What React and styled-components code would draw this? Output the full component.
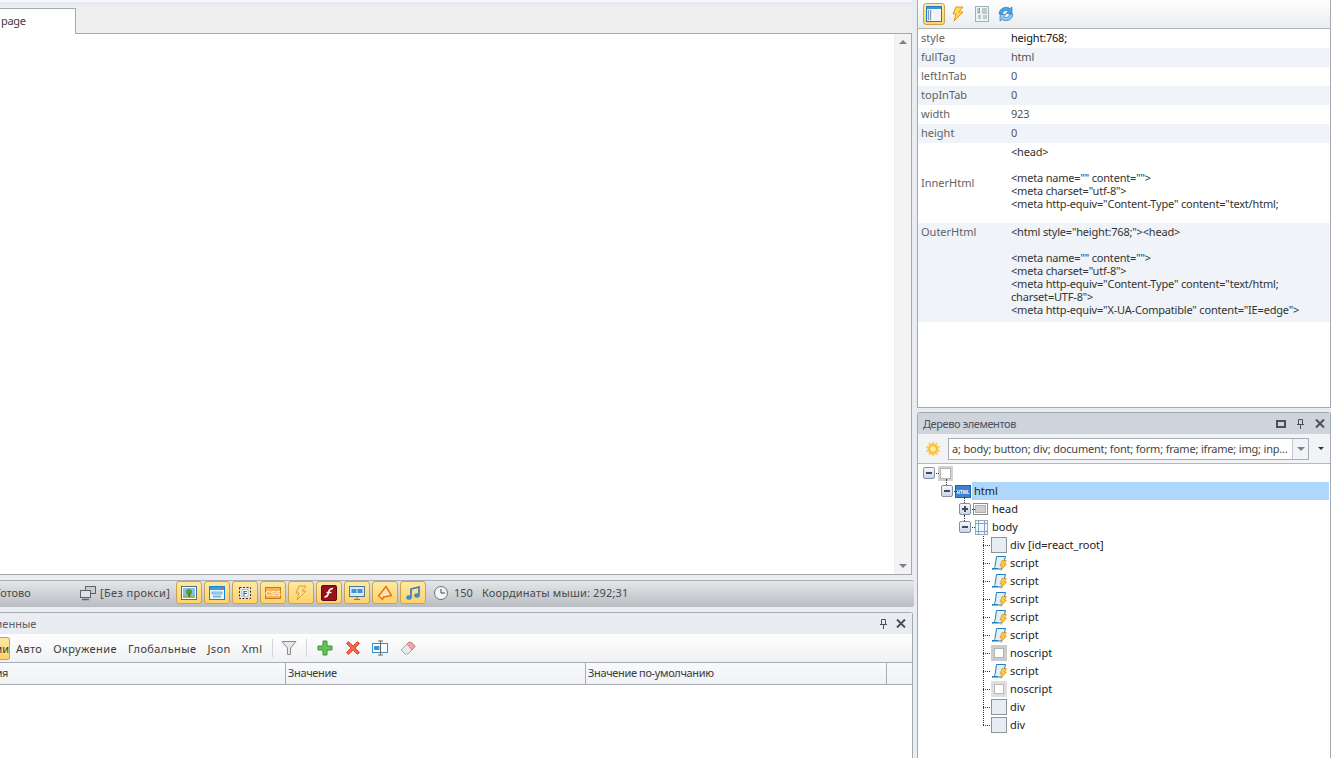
import React from 'react'
import styled, { createGlobalStyle } from 'styled-components'

const GlobalStyle = createGlobalStyle`
  html, body {
    margin: 0;
    padding: 0;
    height: 100%;
    overflow: hidden;
    background: #e9edf2;
  }
  body {
    font-family: "Noto Sans", "Liberation Sans", sans-serif;
    font-size: 11px;
    color: #3c3c3c;
  }
`

const Page = styled.div`
  display: grid;
  grid-template-columns: 917px 414px;
  width: 1331px;
  height: 758px;
  overflow: hidden;
`

const LeftColumn = styled.div`
  display: flex;
  flex-direction: column;
  min-width: 0;
`

const TopStrip = styled.div`
  height: 8px;
  width: 912px;
  background: linear-gradient(#f7f8fb 0, #f7f8fb 2px, #e4e7f0 2px, #e8ebf1 5px, #efefef 8px);
`

const TabStrip = styled.div`
  display: flex;
  height: 25px;
  width: 912px;
  background: #efefef;
  border-bottom: 1px solid #a4a8b0;
`

const Tab = styled.div`
  width: 74px;
  height: 26px;
  padding-left: 1px;
  line-height: 23px;
  letter-spacing: -0.3px;
  background: #fff;
  border-top: 1px solid #a4a8b0;
  border-right: 1px solid #a4a8b0;
`

const Document = styled.div`
  display: flex;
  justify-content: flex-end;
  width: 911px;
  height: 540px;
  background: #fff;
  border-right: 1px solid #a4a8b0;
  border-bottom: 1px solid #a4a8b0;
`

const Scrollbar = styled.div`
  display: flex;
  flex-direction: column;
  justify-content: space-between;
  align-items: center;
  width: 17px;
  padding: 6px 0;
  box-sizing: border-box;
  background: #f3f3f3;
  border-left: 1px solid #ececec;
`

const Arrow = styled.div`
  width: 0;
  height: 0;
  border-left: 4px solid transparent;
  border-right: 4px solid transparent;
  border-${({ $up }) => ($up ? 'bottom' : 'top')}: 4px solid #7d8187;
`

const StatusBar = styled.div`
  display: flex;
  align-items: center;
  box-sizing: border-box;
  width: 914px;
  height: 27px;
  margin-top: 5px;
  padding-bottom: 3px;
  background: linear-gradient(#e4e6e8, #b9bdc2);
  border-top: 1px solid #a9adb3;
  border-radius: 0 2px 2px 0;
  color: #4a4a4a;
`

const StatusLabel = styled.span`
  margin-left: -5px;
  width: 85px;
  flex: none;
`

const ProxyLabel = styled.span`
  margin-left: 4px;
  width: 76px;
  flex: none;
  letter-spacing: 0.35px;
`

const StatusButtons = styled.div`
  display: flex;
  gap: 2px;
`

const StatusButton = styled.div`
  display: flex;
  align-items: center;
  justify-content: center;
  width: 24px;
  height: 21px;
  background: linear-gradient(#ffe9a3, #fdd26a);
  border: 1px solid #c9a352;
  border-radius: 3px;
`

const ClockWrap = styled.span`
  display: flex;
  margin-left: 7px;
`

const StatusValue = styled.span`
  margin-left: 5px;
  width: 28px;
`

const Coordinates = styled.span`
  letter-spacing: 0.17px;
`

const BottomPanel = styled.div`
  display: flex;
  flex-direction: column;
  flex: 1;
  width: 912px;
  margin-top: 5px;
  background: #fff;
  border-top: 1px solid #a9adb3;
  border-right: 1px solid #a4a8b0;
  border-top-right-radius: 3px;
`

const PanelTitle = styled.div`
  display: flex;
  align-items: center;
  justify-content: space-between;
  height: 21px;
  background: #e9edf2;
  color: #5c6066;
`

const ClippedTitle = styled.span`
  margin-left: -33px;
`

const TitleActions = styled.div`
  display: flex;
  align-items: center;
  gap: ${({ $gap }) => $gap}px;
  padding-right: ${({ $right }) => $right}px;
`

const VarToolbar = styled.div`
  display: flex;
  align-items: center;
  height: 28px;
  background: linear-gradient(#ffffff, #eff1f3);
  border-bottom: 1px solid #a9adb3;
`

const ActiveFilter = styled.div`
  display: flex;
  align-items: center;
  height: 21px;
  width: 9px;
  overflow: hidden;
  justify-content: flex-end;
  background: linear-gradient(#ffe9a3, #fdd26a);
  border: 1px solid #c9a352;
  border-left: 0;
  border-radius: 0 3px 3px 0;
`

const FilterLink = styled.span`
  margin-left: ${({ $gap }) => $gap}px;
  letter-spacing: 0.4px;
`

const ToolSeparator = styled.span`
  width: 1px;
  height: 18px;
  background: #d2d5d9;
  margin-left: ${({ $gap }) => $gap}px;
`

const ToolIcon = styled.span`
  display: flex;
  margin-left: ${({ $gap }) => $gap}px;
`

const HeaderRow = styled.div`
  display: grid;
  grid-template-columns: 286px 300px 301px 1fr;
  height: 21px;
  background: linear-gradient(#f8f9fb, #f0f2f5);
  border-bottom: 1px solid #a9adb3;
`

const HeaderCell = styled.div`
  display: flex;
  align-items: center;
  box-sizing: border-box;
  padding: 0 0 2px 2px;
  letter-spacing: -0.35px;
  border-right: 1px solid #a9adb3;
  overflow: hidden;
  &:last-child {
    border-right: 0;
  }
`

const ClippedHeader = styled.span`
  margin-left: -16px;
`

const RightColumn = styled.div`
  display: flex;
  flex-direction: column;
  min-width: 0;
`

const PropertiesPane = styled.div`
  display: flex;
  flex-direction: column;
  height: 407px;
  background: #fff;
  border-left: 1px solid #a4a8b0;
  border-right: 1px solid #a4a8b0;
  border-bottom: 1px solid #a4a8b0;
`

const PropToolbar = styled.div`
  display: flex;
  align-items: center;
  gap: 8px;
  height: 28px;
  padding-left: 5px;
  background: linear-gradient(#ffffff, #e9ecef);
  border-bottom: 1px solid #b0b4ba;
`

const PropActive = styled.div`
  display: flex;
  align-items: center;
  justify-content: center;
  width: 20px;
  height: 20px;
  margin-right: -3px;
  background: linear-gradient(#ffe9a3, #fdd26a);
  border: 1px solid #c9a352;
  border-radius: 3px;
`

const PropRow = styled.div`
  display: grid;
  grid-template-columns: 90px 1fr;
  align-items: ${({ $labelTop }) => ($labelTop ? 'start' : 'center')};
  min-height: 19px;
  padding-left: 3px;
  background: ${({ $shade }) => ($shade ? '#f0f3f8' : '#fff')};
`

const PropName = styled.div`
  color: #5e6266;
  line-height: ${({ $labelTop }) => ($labelTop ? '18px' : '17px')};
  padding-bottom: ${({ $labelTop }) => ($labelTop ? 0 : 2)}px;
`

const PropValue = styled.div`
  color: ${({ $strong }) => ($strong ? '#111' : '#555')};
  letter-spacing: -0.2px;
  line-height: 17px;
  padding-bottom: 2px;
`

const PropLines = styled.div`
  padding: 2px 0 ${({ $bottom }) => $bottom}px;
  line-height: 13px;
  letter-spacing: -0.19px;
  color: #333;
  white-space: pre;
  overflow: hidden;
`

const TreePane = styled.div`
  display: flex;
  flex-direction: column;
  flex: 1;
  margin-top: 4px;
  background: #fff;
  border: 1px solid #a4a8b0;
  border-bottom: 0;
  border-radius: 3px 3px 0 0;
  min-height: 0;
`

const TreeTitle = styled.div`
  display: flex;
  align-items: center;
  justify-content: space-between;
  height: 21px;
  padding-left: 5px;
  background: #cdd4dc;
  color: #4d5157;
  letter-spacing: -0.4px;
`

const TreeToolbar = styled.div`
  display: flex;
  align-items: center;
  height: 29px;
  background: #f1f3f6;
  border-bottom: 1px solid #b4b8be;
`

const SunWrap = styled.span`
  display: flex;
  margin: 0 7px 0 7px;
`

const ComboBox = styled.div`
  display: flex;
  align-items: center;
  justify-content: space-between;
  width: 356px;
  height: 20px;
  background: #fff;
  border: 1px solid #a9adb3;
  padding-left: 3px;
  color: #444;
  letter-spacing: -0.19px;
  white-space: nowrap;
`

const ComboArrow = styled.div`
  display: flex;
  flex: none;
  align-items: center;
  justify-content: center;
  width: 15px;
  height: 20px;
  border-left: 1px solid #c3c6cb;
  background: #f1f3f6;
`

const MenuArrow = styled.div`
  margin-left: 9px;
  width: 0;
  height: 0;
  border-left: 3px solid transparent;
  border-right: 3px solid transparent;
  border-top: 3px solid #333;
`

const Tree = styled.div`
  display: flex;
  flex-direction: column;
`

const TreeRow = styled.div`
  display: flex;
  align-items: center;
  height: 18px;
  padding-left: ${({ $indent }) => $indent}px;
  color: #222;
`

const Expander = styled.span`
  position: relative;
  display: flex;
  align-items: center;
  justify-content: center;
  width: 10px;
  height: 10px;
  flex: none;
  border: 1px solid #7f8fa8;
  border-radius: 2px;
  background: linear-gradient(#f6f8fb, #cbd5e3);
  &::after {
    content: '';
    position: absolute;
    left: 12px;
    top: 5px;
    width: 3px;
    border-top: 1px dotted #333;
  }
  ${({ $stem }) => $stem && `
    &::before {
      content: '';
      position: absolute;
      left: 4px;
      bottom: 11px;
      height: 6px;
      border-left: 1px dotted #333;
    }
  `}
`

const Sign = styled.span`
  position: relative;
  width: 6px;
  height: 2px;
  background: #3c4c66;
  ${({ $plus }) => $plus && `
    &::after {
      content: '';
      position: absolute;
      left: 2px;
      top: -2px;
      width: 2px;
      height: 6px;
      background: #3c4c66;
    }
  `}
`

const NodeIcon = styled.span`
  display: flex;
  flex: none;
  margin-left: ${({ $gap }) => $gap}px;
`

const NodeLabel = styled.span`
  margin-left: ${({ $gap }) => $gap}px;
  padding-bottom: 2px;
`

const SelectedLabel = styled.span`
  flex: 1;
  height: 18px;
  line-height: 18px;
  padding-left: 2px;
  margin: 0 1px 0 1px;
  background: #aed7fb;
`

const Stem = styled.span`
  flex: none;
  align-self: stretch;
  width: 8px;
  margin-left: 65px;
  background-image:
    repeating-linear-gradient(to bottom, #333 0 1px, transparent 1px 2px),
    repeating-linear-gradient(to right, #333 0 1px, transparent 1px 2px);
  background-repeat: no-repeat;
  background-size: 1px ${({ $last }) => ($last ? '9px' : '100%')}, 100% 1px;
  background-position: 0 0, 0 9px;
`

const Svg = ({ size = 16, children }) => (
  <svg width={size} height={size} viewBox="0 0 16 16">{children}</svg>
)

const PropsIcon = () => (
  <Svg>
    <rect x="0.5" y="0.5" width="15" height="15" fill="#fff" stroke="#1f7ec2" />
    <rect x="1" y="1" width="14" height="2" fill="#3a97d6" />
    <rect x="1" y="3" width="5" height="12" fill="#dbe9f5" />
    <path d="M2 5h3M2 7h3M2 9h3M2 11h3M2 13h3" stroke="#2c4d78" strokeDasharray="1 1" />
    <rect x="7" y="4" width="8" height="11" fill="#eef3f8" />
  </Svg>
)

const BoltIcon = ({ pale }) => (
  <Svg>
    <path d="M6 1h7L9 6h4L4 15l2-7H3z" fill={pale ? '#fde08d' : '#ffd75a'} stroke={pale ? '#dca23e' : '#e0962a'} />
  </Svg>
)

const FormIcon = () => (
  <Svg>
    <rect x="1.5" y="0.5" width="13" height="15" fill="#eef4f4" stroke="#9db4b4" />
    <path d="M4 2v5h1.500V2M8 3h5M8 5h5M8 7h5M4 10h3M9 10h4M4 12h3M9 12h4" stroke="#8aa3a3" fill="none" />
  </Svg>
)

const RefreshIcon = () => (
  <Svg>
    <path d="M1 8a7 7 0 0 1 11-5.500L14 1v6.500H8l2.200-2.200A3.500 3.500 0 0 0 4.500 8z" fill="#4da2e0" stroke="#1d6fb0" strokeWidth="0.6" />
    <path d="M15 8a7 7 0 0 1-11 5.500L2 15V8.500h6l-2.200 2.200A3.500 3.500 0 0 0 11.500 8z" fill="#8fc8ef" stroke="#1d6fb0" strokeWidth="0.6" />
  </Svg>
)

const ImageIcon = () => (
  <Svg>
    <rect x="0.5" y="1.500" width="15" height="13" fill="#fff" stroke="#5c6a7c" />
    <rect x="2" y="3" width="12" height="7" fill="#7cc4ee" />
    <rect x="2" y="10" width="12" height="3" fill="#8fc04c" />
    <circle cx="8" cy="7" r="3" fill="#5a9c32" />
    <rect x="7.500" y="8" width="1.500" height="4" fill="#7a5a2c" />
  </Svg>
)

const WindowIcon = () => (
  <Svg>
    <rect x="0.5" y="1.500" width="15" height="13" fill="#eaf4fb" stroke="#1f83c9" />
    <rect x="1" y="2" width="14" height="3" fill="#3a9ddf" />
    <rect x="12" y="3" width="2" height="1" fill="#e05050" />
    <rect x="3" y="7" width="10" height="2" fill="#bcdcf2" stroke="#1f83c9" strokeWidth="0.5" />
    <rect x="4" y="10.500" width="8" height="2" fill="#6cb6e6" />
  </Svg>
)

const FrameIcon = () => (
  <Svg>
    <rect x="2.500" y="2.500" width="11" height="11" fill="#e7e7e7" stroke="#333" strokeDasharray="2 1.500" />
    <rect x="5" y="4.500" width="6" height="7" fill="#fff" stroke="#888" strokeWidth="0.5" />
    <text x="8" y="10.500" fontSize="6.500" fontWeight="700" textAnchor="middle" fill="#555" fontFamily="Liberation Sans">F</text>
  </Svg>
)

const CssIcon = () => (
  <Svg>
    <rect x="0.5" y="2.500" width="15" height="11" fill="#f4b45c" stroke="#c77a25" />
    <text x="8" y="11" fontSize="7.500" fontWeight="700" textAnchor="middle" fill="#fff3d6" fontFamily="Liberation Sans">CSS</text>
  </Svg>
)

const FlashIcon = () => (
  <Svg>
    <rect x="0.5" y="0.5" width="15" height="15" rx="1.500" fill="#9a1018" stroke="#5a0a10" />
    <path d="M12 3.500C9 3.500 8 5 7.500 7.500 7 10.500 6 12 3.500 12" fill="none" stroke="#fff" strokeWidth="1.600" />
    <path d="M5.500 7.500h5" stroke="#fff" strokeWidth="1.400" />
  </Svg>
)

const MonitorIcon = () => (
  <Svg>
    <rect x="0.5" y="1.500" width="15" height="10" fill="#d8e8f5" stroke="#4f7598" />
    <rect x="2.500" y="4" width="5" height="4" fill="#3a97d6" />
    <rect x="8.500" y="4" width="5" height="4" fill="#3a97d6" />
    <path d="M8 12v2M5 14.500h6" stroke="#6f7f90" />
  </Svg>
)

const HornIcon = () => (
  <Svg>
    <path d="M1.500 11L9 1.500l5.500 9-8 1.500-1 2.500-2-2z" fill="#ffe8b0" stroke="#f0701a" strokeWidth="1.500" strokeLinejoin="round" />
  </Svg>
)

const MusicIcon = () => (
  <Svg>
    <path d="M6 12V4l8-2v8" fill="none" stroke="#2e78bc" strokeWidth="1.600" />
    <ellipse cx="4" cy="12.500" rx="2.800" ry="2.200" fill="#3f8ccb" />
    <ellipse cx="12" cy="10.500" rx="2.800" ry="2.200" fill="#3f8ccb" />
  </Svg>
)

const ClockIcon = () => (
  <Svg>
    <circle cx="8" cy="8" r="6.500" fill="#f3f4f5" stroke="#6e7278" />
    <path d="M8 4v4h4" fill="none" stroke="#444" />
  </Svg>
)

const NetworkIcon = () => (
  <Svg>
    <rect x="5.500" y="1.500" width="10" height="7" fill="#c9ccd0" stroke="#5f6368" />
    <rect x="0.5" y="5.500" width="10" height="7" fill="#dfe1e4" stroke="#5f6368" />
    <path d="M2 14.500h7" stroke="#5f6368" strokeWidth="1.500" />
  </Svg>
)

const FunnelIcon = () => (
  <Svg>
    <path d="M1 1.500h14L9.500 8v6.500h-3V8z" fill="#e8e8e8" stroke="#8c8c8c" />
  </Svg>
)

const PlusIcon = () => (
  <Svg>
    <path d="M6 1h4v5h5v4h-5v5H6v-5H1V6h5z" fill="#62c655" stroke="#3b9633" />
  </Svg>
)

const CrossIcon = () => (
  <Svg>
    <path d="M3.500 1.500L8 6l4.500-4.500 2 2L10 8l4.500 4.500-2 2L8 10l-4.500 4.500-2-2L6 8 1.500 3.500z" fill="#f4694a" stroke="#d84a2a" />
  </Svg>
)

const SplitIcon = () => (
  <Svg>
    <rect x="0.5" y="3.500" width="15" height="9" fill="#fff" stroke="#3a8cc8" />
    <rect x="2" y="6" width="5.500" height="4" fill="#3a97d6" />
    <path d="M8.500 1v14M6 1h5M6 15h5" stroke="#666" />
  </Svg>
)

const EraserIcon = () => (
  <Svg>
    <path d="M1 10l8-8 3 1 3 3-1 2-6 6H5z" fill="#e9e9e9" stroke="#a8a8a8" />
    <path d="M7 4l2-2 3 1 3 3-1 2-2 2z" fill="#f1a3ae" stroke="#c88" />
  </Svg>
)

const SunIcon = () => (
  <Svg>
    <path d="M8 0l1.500 3 3-1.500-.5 3.500 3.500.5L13 8l2.500 2.500-3.500.5.500 3.500-3-1.500L8 16l-1.500-3-3 1.500.5-3.500-3.500-.5L3 8 .5 5.500 4 5l-.5-3.500 3 1.500z" fill="#ffc84a" />
    <circle cx="8" cy="8" r="3.500" fill="#fff0a0" stroke="#f2b030" />
  </Svg>
)

const FloatIcon = () => (
  <svg width="10" height="8" viewBox="0 0 10 8">
    <rect x="1" y="1" width="8" height="6" fill="none" stroke="#4d5157" strokeWidth="2" />
  </svg>
)

const PinIcon = () => (
  <svg width="9" height="10" viewBox="0 0 9 10">
    <path d="M2.500.5h4v5h-4zM1 5.500h7M4.500 6v4" fill="none" stroke="#4d5157" />
  </svg>
)

const CloseIcon = () => (
  <svg width="10" height="9" viewBox="0 0 10 9">
    <path d="M1 .5l8 8M9 .5l-8 8" fill="none" stroke="#4d5157" strokeWidth="2" />
  </svg>
)

const RootNode = () => (
  <svg width="15" height="15" viewBox="0 0 15 15">
    <rect width="15" height="15" fill="#d2d2d2" />
    <rect x="2.500" y="2.500" width="10" height="10" fill="#fff" stroke="#808080" strokeDasharray="1 1" />
  </svg>
)

const HtmlNode = () => (
  <svg width="16" height="13" viewBox="0 0 16 13">
    <rect x="0.5" y="0.5" width="15" height="12" fill="#3e82cf" stroke="#2562a8" />
    <text x="8" y="8.500" fontSize="5" fontWeight="700" textAnchor="middle" textLength="13" lengthAdjust="spacingAndGlyphs" fill="#fff" fontFamily="Liberation Sans">HTML</text>
  </svg>
)

const HeadNode = () => (
  <svg width="15" height="12" viewBox="0 0 15 12">
    <rect x="0.5" y="0.5" width="14" height="11" fill="#fff" stroke="#8c8c8c" />
    <rect x="2.500" y="2.500" width="10" height="7" fill="#cfcfcf" stroke="#777" strokeDasharray="1 1" />
  </svg>
)

const BodyNode = () => (
  <svg width="13" height="15" viewBox="0 0 13 15">
    <rect x="0.5" y="0.5" width="12" height="14" fill="#f3f6fa" stroke="#a6a9ad" />
    <path d="M3.500 0v15M9.500 0v15M0 3.500h13M0 11.500h13" stroke="#7fa4cc" />
  </svg>
)

const DivNode = () => (
  <svg width="16" height="16" viewBox="0 0 16 16">
    <rect x="0.5" y="0.5" width="15" height="15" fill="#e7edf5" stroke="#8f9296" />
  </svg>
)

const ScriptNode = () => (
  <svg width="16" height="16" viewBox="0 0 16 16">
    <path d="M5.500 1.500h9L12 11c-.5 2-1.500 3-3 3H1c1.500 0 2.500-1 3-2.500z" fill="#e3f0fa" stroke="#1f7ec2" />
    <path d="M1 13.500h6" stroke="#1f7ec2" />
    <path d="M11 5.500h4.500l-2 3.500h2L10 15.500l1-4.500H9z" fill="#ffc93c" stroke="#c98a20" strokeWidth="0.6" />
  </svg>
)

const NoscriptNode = ({ pale }) => (
  <svg width="16" height="16" viewBox="0 0 16 16">
    <rect width="16" height="16" fill={pale ? '#dedede' : '#cccccc'} />
    <rect x="3.500" y="3.500" width="9" height="9" fill="#fff" stroke="#808080" strokeDasharray="1 1" />
  </svg>
)

const props = [
  { name: 'style', value: 'height:768;', strong: true },
  { name: 'fullTag', value: 'html', shade: true },
  { name: 'leftInTab', value: '0' },
  { name: 'topInTab', value: '0', shade: true },
  { name: 'width', value: '923' },
  { name: 'height', value: '0', shade: true }
]

const innerHtml = `<head>

<meta name="" content="">
<meta charset="utf-8">
<meta http-equiv="Content-Type" content="text/html;`

const outerHtml = `<html style="height:768;"><head>

<meta name="" content="">
<meta charset="utf-8">
<meta http-equiv="Content-Type" content="text/html;
charset=UTF-8">
<meta http-equiv="X-UA-Compatible" content="IE=edge">`

const statusIcons = [ImageIcon, WindowIcon, FrameIcon, CssIcon, BoltIcon, FlashIcon, MonitorIcon, HornIcon, MusicIcon]

const bodyChildren = [
  { label: 'div [id=react_root]', Icon: DivNode },
  { label: 'script', Icon: ScriptNode },
  { label: 'script', Icon: ScriptNode },
  { label: 'script', Icon: ScriptNode },
  { label: 'script', Icon: ScriptNode },
  { label: 'script', Icon: ScriptNode },
  { label: 'noscript', Icon: NoscriptNode },
  { label: 'script', Icon: ScriptNode },
  { label: 'noscript', Icon: NoscriptNode, pale: true },
  { label: 'div', Icon: DivNode },
  { label: 'div', Icon: DivNode }
]

const App = () => (
  <Page>
    <GlobalStyle />

    <LeftColumn>
      <TopStrip />
      <TabStrip>
        <Tab>page</Tab>
      </TabStrip>
      <Document>
        <Scrollbar>
          <Arrow $up />
          <Arrow />
        </Scrollbar>
      </Document>

      <StatusBar>
        <StatusLabel>Готово</StatusLabel>
        <NetworkIcon />
        <ProxyLabel>[Без прокси]</ProxyLabel>
        <StatusButtons>
          {statusIcons.map((Icon, i) => (
            <StatusButton key={i}>
              <Icon pale />
            </StatusButton>
          ))}
        </StatusButtons>
        <ClockWrap><ClockIcon /></ClockWrap>
        <StatusValue>150</StatusValue>
        <Coordinates>Координаты мыши: 292;31</Coordinates>
      </StatusBar>

      <BottomPanel>
        <PanelTitle>
          <ClippedTitle>Переменные</ClippedTitle>
          <TitleActions $gap={8} $right={6}>
            <PinIcon />
            <CloseIcon />
          </TitleActions>
        </PanelTitle>
        <VarToolbar>
          <ActiveFilter>ми</ActiveFilter>
          <FilterLink $gap={6}>Авто</FilterLink>
          <FilterLink $gap={11}>Окружение</FilterLink>
          <FilterLink $gap={11}>Глобальные</FilterLink>
          <FilterLink $gap={11}>Json</FilterLink>
          <FilterLink $gap={11}>Xml</FilterLink>
          <ToolSeparator $gap={9} />
          <ToolIcon $gap={8}><FunnelIcon /></ToolIcon>
          <ToolSeparator $gap={9} />
          <ToolIcon $gap={10}><PlusIcon /></ToolIcon>
          <ToolIcon $gap={12}><CrossIcon /></ToolIcon>
          <ToolIcon $gap={11}><SplitIcon /></ToolIcon>
          <ToolIcon $gap={12}><EraserIcon /></ToolIcon>
        </VarToolbar>
        <HeaderRow>
          <HeaderCell><ClippedHeader>Имя</ClippedHeader></HeaderCell>
          <HeaderCell>Значение</HeaderCell>
          <HeaderCell>Значение по-умолчанию</HeaderCell>
          <HeaderCell />
        </HeaderRow>
      </BottomPanel>
    </LeftColumn>

    <RightColumn>
      <PropertiesPane>
        <PropToolbar>
          <PropActive><PropsIcon /></PropActive>
          <BoltIcon />
          <FormIcon />
          <RefreshIcon />
        </PropToolbar>
        {props.map((p) => (
          <PropRow key={p.name} $shade={p.shade}>
            <PropName>{p.name}</PropName>
            <PropValue $strong={p.strong}>{p.value}</PropValue>
          </PropRow>
        ))}
        <PropRow>
          <PropName>InnerHtml</PropName>
          <PropLines $bottom={13}>{innerHtml}</PropLines>
        </PropRow>
        <PropRow $shade $labelTop>
          <PropName $labelTop>OuterHtml</PropName>
          <PropLines $bottom={6}>{outerHtml}</PropLines>
        </PropRow>
      </PropertiesPane>

      <TreePane>
        <TreeTitle>
          <span>Дерево элементов</span>
          <TitleActions $gap={10} $right={5}>
            <FloatIcon />
            <PinIcon />
            <CloseIcon />
          </TitleActions>
        </TreeTitle>
        <TreeToolbar>
          <SunWrap><SunIcon /></SunWrap>
          <ComboBox>
            <span>a; body; button; div; document; font; form; frame; iframe; img; inp...</span>
            <ComboArrow><Arrow /></ComboArrow>
          </ComboBox>
          <MenuArrow />
        </TreeToolbar>
        <Tree>
          <TreeRow $indent={5}>
            <Expander><Sign /></Expander>
            <NodeIcon $gap={3}><RootNode /></NodeIcon>
          </TreeRow>
          <TreeRow $indent={23}>
            <Expander $stem><Sign /></Expander>
            <NodeIcon $gap={2}><HtmlNode /></NodeIcon>
            <SelectedLabel>html</SelectedLabel>
          </TreeRow>
          <TreeRow $indent={41}>
            <Expander $stem><Sign $plus /></Expander>
            <NodeIcon $gap={2}><HeadNode /></NodeIcon>
            <NodeLabel $gap={4}>head</NodeLabel>
          </TreeRow>
          <TreeRow $indent={41}>
            <Expander $stem><Sign /></Expander>
            <NodeIcon $gap={4}><BodyNode /></NodeIcon>
            <NodeLabel $gap={4}>body</NodeLabel>
          </TreeRow>
          {bodyChildren.map(({ label, Icon, pale }, i) => (
            <TreeRow key={i} $indent={0}>
              <Stem $last={i === bodyChildren.length - 1} />
              <NodeIcon $gap={0}><Icon pale={pale} /></NodeIcon>
              <NodeLabel $gap={3}>{label}</NodeLabel>
            </TreeRow>
          ))}
        </Tree>
      </TreePane>
    </RightColumn>
  </Page>
)

export default App
